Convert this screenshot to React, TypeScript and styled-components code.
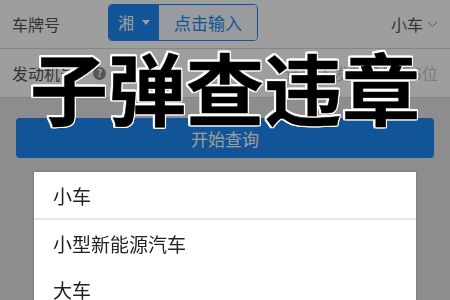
import React from 'react';
import styled, { createGlobalStyle } from 'styled-components';

const GlobalStyle = createGlobalStyle`
  html, body {
    margin: 0;
    padding: 0;
    height: 100%;
    overflow: hidden;
  }
  body {
    font-family: "Noto Sans CJK SC", "Noto Sans", sans-serif;
    background: #e4e4e8;
  }
`;

const Page = styled.div`
  min-height: 100vh;
  background: #e4e4e8;
`;

const Field = styled.div`
  display: flex;
  align-items: center;
  height: 48px;
  padding: 0 12px;
  background: #fff;
  border-bottom: 1px solid #d9d9d9;
`;

const Label = styled.span`
  font-size: 16px;
  color: #555;
  width: 96px;
  flex-shrink: 0;
  display: flex;
  align-items: center;
`;

const Help = styled.span`
  display: inline-flex;
  align-items: center;
  justify-content: center;
  width: 13px;
  height: 13px;
  margin-left: 17px;
  border-radius: 50%;
  background: #8a8a8a;
  color: #fff;
  font-size: 10px;
  font-weight: 700;
  line-height: 1;
`;

const Plate = styled.div`
  display: flex;
  height: 35px;
  border: 1px solid #1e88f5;
  border-radius: 4px;
  overflow: hidden;
  margin-top: -4px;
`;

const Province = styled.div`
  width: 50px;
  display: flex;
  align-items: center;
  justify-content: center;
  gap: 8px;
  background: #1e88f5;
  color: #fff;
  font-size: 16px;
`;

const Caret = styled.span`
  width: 0;
  height: 0;
  border-left: 4px solid transparent;
  border-right: 4px solid transparent;
  border-top: 5px solid #fff;
`;

const PlateInput = styled.div`
  width: 98px;
  display: flex;
  align-items: center;
  justify-content: center;
  background: #f7fbff;
  color: #1e88f5;
  font-size: 17px;
`;

const Right = styled.div`
  margin-left: auto;
  display: flex;
  align-items: center;
  gap: 4px;
  font-size: 16px;
  color: #555;
`;

const Placeholder = styled.span`
  margin-left: auto;
  font-size: 16px;
  color: #c8c8c8;
`;

const Submit = styled.button`
  display: block;
  width: calc(100% - 32px);
  height: 40px;
  margin: 20px 16px 0;
  border: none;
  border-radius: 4px;
  background: #1e88f5;
  color: #fff;
  font-family: inherit;
  font-size: 17px;
`;

const Mask = styled.div`
  position: fixed;
  inset: 0;
  background: rgba(0, 0, 0, 0.38);
`;

const Sheet = styled.ul`
  position: fixed;
  top: 172px;
  left: 34px;
  right: 34px;
  margin: 0;
  padding: 0;
  list-style: none;
  background: #fff;
  box-shadow: 0 0 3px rgba(0, 0, 0, 0.25);
`;

const Option = styled.li<{ $divider?: boolean }>`
  height: 46px;
  display: flex;
  align-items: center;
  padding-left: 19px;
  font-size: 19px;
  color: #222;
  border-bottom: ${({ $divider }) => ($divider ? '2px solid #e6e6e6' : 'none')};
`;

const Title = styled.div`
  position: fixed;
  top: 47px;
  left: 0;
  right: 0;
  text-align: center;
  font-size: 78px;
  font-weight: 700;
  line-height: 1;
  color: #000;
  -webkit-text-stroke: 0.5px #000;
  filter: drop-shadow(1.5px 0 0 #fff) drop-shadow(-1.5px 0 0 #fff)
    drop-shadow(0 1.5px 0 #fff) drop-shadow(0 -1.5px 0 #fff);
`;

const Chevron = () => (
  <svg width="11" height="7" viewBox="0 0 11 7" fill="none">
    <path d="M1 1l4.5 4.5L10 1" stroke="#8a8a8a" strokeWidth="1" />
  </svg>
);

const carTypes = ['小车', '小型新能源汽车', '大车'];

export default function App() {
  return (
    <Page>
      <GlobalStyle />
      <Field>
        <Label>车牌号</Label>
        <Plate>
          <Province>
            湘<Caret />
          </Province>
          <PlateInput>点击输入</PlateInput>
        </Plate>
        <Right>
          小车
          <Chevron />
        </Right>
      </Field>
      <Field>
        <Label>
          发动机号<Help>?</Help>
        </Label>
        <Placeholder>请输入发动机号后6位</Placeholder>
      </Field>
      <Submit>开始查询</Submit>
      <Mask />
      <Sheet>
        {carTypes.map((t, i) => (
          <Option key={t} $divider={i === 0}>
            {t}
          </Option>
        ))}
      </Sheet>
      <Title>子弹查违章</Title>
    </Page>
  );
}
